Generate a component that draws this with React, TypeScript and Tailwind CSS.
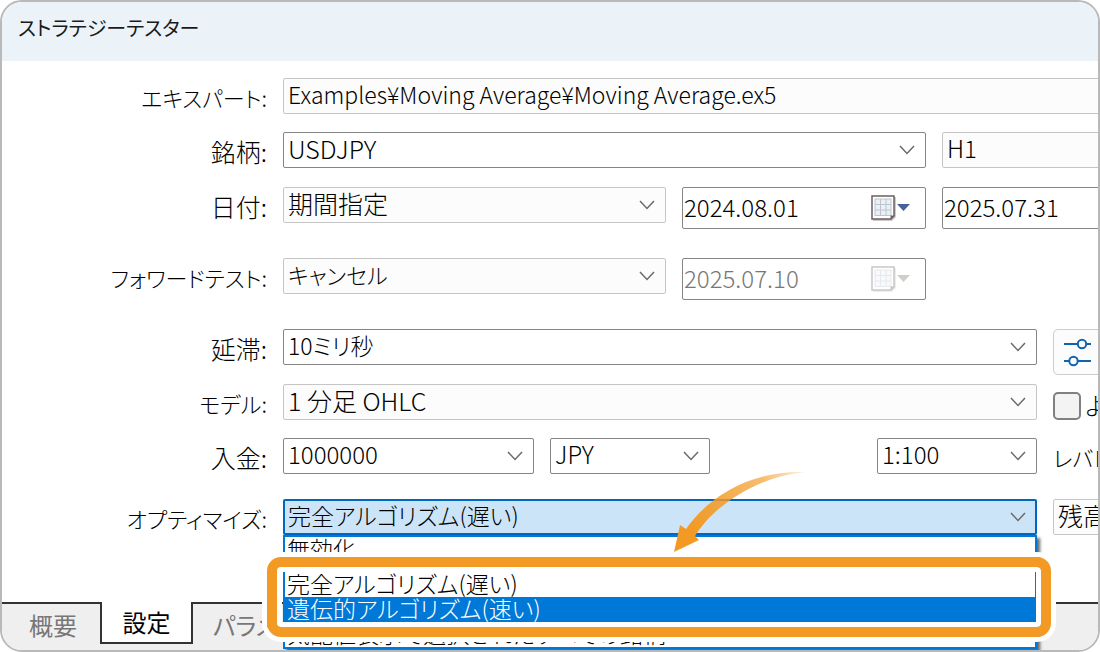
import { ReactNode } from 'react';

const sizes = {
  kana: 'text-[22px]',
  mixed: 'text-[23px]',
  digits: 'text-[24px]',
  kanji: 'text-[25px]',
};
type Size = keyof typeof sizes;

const fieldText = 'leading-[26px] text-black font-light';

function Chevron() {
  return (
    <svg className="pointer-events-none absolute right-[11px] top-[12px] h-3 w-4" viewBox="0 0 16 12" fill="none" stroke="#6a6a6a" strokeWidth="1.5" aria-hidden="true">
      <path d="M1 2 L8 9.5 L15 2" />
    </svg>
  );
}

type SelectProps = { id: string; label?: string; value: string; size?: Size; tone?: 'plain' | 'soft' | 'active'; className: string; children?: ReactNode };

function SelectField({ id, label, value, size = 'digits', tone = 'plain', className, children }: SelectProps) {
  const tones = {
    plain: 'border border-[#858585] bg-white pl-1',
    soft: 'border border-[#c6c6c6] bg-[#fcfcfc] pl-1',
    active: 'border-2 border-[#0067c0] bg-[#cce4f7] pl-[3px]',
  };
  return (
    <div className={`relative ${className}`}>
      <select id={id} aria-label={label} defaultValue={value} className={`h-9 w-full appearance-none rounded-[2px] pb-1 pr-7 outline-none ${fieldText} ${sizes[size]} ${tones[tone]}`}>
        <option>{value}</option>
      </select>
      <Chevron />
      {children}
    </div>
  );
}

function CalendarIcon({ disabled = false }: { disabled?: boolean }) {
  return (
    <svg className={disabled ? 'h-7 w-10 opacity-35' : 'h-7 w-10'} viewBox="0 0 40 28" aria-hidden="true">
      <path d="M2 3h23v20l-4 4H2z" fill="#cfcaca" />
      <path d="M1 2h22v20l-3 3H1z" fill="#fff" stroke="#6b5f62" strokeWidth="1.5" />
      <rect x="3.500" y="4.500" width="17" height="17.500" fill="#bcc4ce" />
      <path d="M4.500 5.500h4.500v4.500H4.500zM10 5.500h4.500v4.500H10zM15.500 5.500h4v4.500h-4zM4.500 11h4.500v4.500H4.500zM10 11h4.500v4.500H10zM15.500 11h4v4.500h-4zM4.500 16.500h4.500v4.500H4.500zM10 16.500h4.500v4.500H10zM15.500 16.500h4v4.500h-4z" fill="#eaf0f6" />
      <path d="M19.500 25.500v-4h4z" fill="#6b5f62" />
      <path d="M26 10h13l-6.500 7z" fill={disabled ? '#77776a' : '#47609a'} />
    </svg>
  );
}

function DateField({ id, label, value, disabled = false, className }: { id: string; label: string; value: string; disabled?: boolean; className: string }) {
  return (
    <div className={`relative ${className}`}>
      <input id={id} aria-label={label} defaultValue={value} disabled={disabled} className={`h-[42px] w-full rounded-[2px] border border-[#858585] bg-white pb-1 pl-px outline-none ${fieldText} ${sizes.digits} disabled:text-[#777]`} />
      <button type="button" aria-label={`${label} カレンダー`} disabled={disabled} className="absolute right-[15px] top-[7px]">
        <CalendarIcon disabled={disabled} />
      </button>
    </div>
  );
}

function Row({ id, label, size, className, children }: { id: string; label: string; size: Size; className: string; children: ReactNode }) {
  return (
    <div className={`flex items-start gap-4 ${className}`}>
      <label htmlFor={id} className={`w-[265px] shrink-0 whitespace-nowrap pt-[5px] text-right font-light leading-7 text-black ${sizes[size]}`}>{label}</label>
      <div className="flex min-w-0 flex-1 items-start gap-4">{children}</div>
    </div>
  );
}

const options = [
  { text: '無効化', selected: false, spacing: 'mb-[10px]' },
  { text: '完全アルゴリズム(遅い)', selected: false, spacing: '' },
  { text: '遺伝的アルゴリズム(速い)', selected: true, spacing: '' },
  { text: '気配値表示で選択されたすべての銘柄', selected: false, spacing: '' },
];

export default function App() {
  return (
    <main className="relative flex min-h-screen flex-col overflow-hidden rounded-[22px] border-2 border-[#b9b9b9] bg-white font-['Noto_Sans_CJK_JP',sans-serif] [font-feature-settings:'palt']">
      <header className="h-[59px] shrink-0 bg-[#ecf3f8] px-4 pt-[10px]">
        <h1 className="text-[20px] leading-8 text-[#1a1a1a]">ストラテジーテスター</h1>
      </header>

      <form className="flex-1 pt-[17px]">
        <Row id="expert" label="エキスパート:" size="kana" className="mb-[18px] h-9">
          <input id="expert" defaultValue="Examples¥Moving Average¥Moving Average.ex5" className={`-mr-1 h-9 min-w-0 flex-1 rounded-[2px] border border-[#c6c6c6] bg-[#fcfcfc] pb-1 pl-1 outline-none ${fieldText} ${sizes.mixed}`} />
        </Row>
        <Row id="symbol" label="銘柄:" size="kanji" className="mb-[19px] h-9">
          <SelectField id="symbol" value="USDJPY" size="kanji" className="min-w-0 flex-1" />
          <SelectField id="period" label="時間足" value="H1" tone="soft" className="-mr-12 w-[204px]" />
        </Row>
        <Row id="range" label="日付:" size="kanji" className="mb-[29px] h-[42px]">
          <SelectField id="range" value="期間指定" size="kanji" tone="soft" className="min-w-0 flex-1" />
          <DateField id="from" label="開始日" value="2024.08.01" className="w-[244px]" />
          <DateField id="to" label="終了日" value="2025.07.31" className="-mr-20 w-[236px]" />
        </Row>
        <Row id="forward" label="フォワードテスト:" size="kana" className="mb-[29px] h-[42px]">
          <SelectField id="forward" value="キャンセル" size="kana" tone="soft" className="min-w-0 flex-1" />
          <DateField id="forward-date" label="フォワード日" value="2025.07.10" disabled className="mr-[172px] w-[244px]" />
        </Row>
        <Row id="delay" label="延滞:" size="kanji" className="mb-[19px] h-9">
          <SelectField id="delay" value="10ミリ秒" size="mixed" className="min-w-0 flex-1" />
          <button type="button" aria-label="詳細設定" className="-mr-[5px] flex h-[46px] w-[50px] shrink-0 items-center justify-center rounded-[5px] border border-[#cccccc] bg-[#fcfcfc]">
            <svg className="h-8 w-7" viewBox="0 0 28 32" fill="none" stroke="#0f64ad" strokeWidth="2" aria-hidden="true">
              <path d="M0 8h13.500M22.500 8H27M0 25h5M14 25h13" />
              <circle cx="18" cy="8" r="4.200" />
              <circle cx="9.500" cy="25" r="4.200" />
            </svg>
          </button>
        </Row>
        <Row id="model" label="モデル:" size="kana" className="mb-[18px] h-9">
          <SelectField id="model" value="1 分足 OHLC" size="kanji" tone="soft" className="min-w-0 flex-1" />
          <div className="flex w-[45px] shrink-0 gap-1 whitespace-nowrap pt-2">
            <input id="profit" type="checkbox" className="size-7 shrink-0 appearance-none rounded-[5px] border-2 border-[#808080] bg-[#f3f3f3]" />
            <label htmlFor="profit" className={`${fieldText} ${sizes.digits}`}>より速く</label>
          </div>
        </Row>
        <Row id="deposit" label="入金:" size="kanji" className="mb-[25px] h-9">
          <SelectField id="deposit" value="1000000" className="w-[251px]" />
          <SelectField id="currency" label="通貨" value="JPY" className="w-[160px]" />
          <SelectField id="leverage" value="1:100" className="ml-auto w-[160px]" />
          <label htmlFor="leverage" className={`w-[45px] shrink-0 whitespace-nowrap pt-[6px] ${fieldText} ${sizes.kana}`}>レバレッジ</label>
        </Row>
        <Row id="optimize" label="オプティマイズ:" size="kana" className="h-[103px]">
          <SelectField id="optimize" value="完全アルゴリズム(遅い)" size="mixed" tone="active" className="z-10 min-w-0 flex-1">
            <ul role="listbox" aria-label="オプティマイズ" className="absolute inset-x-0 top-9 border-2 border-[#0078d7] bg-white shadow-[3px_3px_3px_rgba(0,0,0,0.6)]">
              {options.map((o) => (
                <li key={o.text} role="option" aria-selected={o.selected} className={`h-[25px] whitespace-nowrap pl-[2px] font-light leading-[22px] ${sizes.mixed} ${o.spacing} ${o.selected ? 'bg-[#0078d7] text-white' : 'text-black'}`}>{o.text}</li>
              ))}
            </ul>
            <div className="pointer-events-none absolute -left-4 -right-[14px] top-[58px] h-20 rounded-[14px] border-[10px] border-[#f39a24] shadow-[0_0_0_5px_#fff,inset_0_0_0_5px_#fff]" />
            <svg className="pointer-events-none absolute right-[233px] top-[-29px] h-[84px] w-[132px]" viewBox="0 0 132 84" aria-hidden="true">
              <defs>
                <linearGradient id="tail" gradientUnits="userSpaceOnUse" x1="20" y1="60" x2="130" y2="2">
                  <stop offset="0" stopColor="#f39a24" />
                  <stop offset="0.700" stopColor="#f39a24" stopOpacity="0.650" />
                  <stop offset="1" stopColor="#f39a24" stopOpacity="0.200" />
                </linearGradient>
              </defs>
              <path d="M2 82 L8 55 L14 59 C36 28 76 0 134 2 C86 6 42 35 23 66 L27 70 Z" fill="url(#tail)" />
            </svg>
          </SelectField>
          <SelectField id="criterion" label="最適化基準" value="残高最大" size="kanji" tone="soft" className="-mr-24 w-[141px]" />
        </Row>
      </form>

      <nav className="flex h-12 shrink-0 items-start bg-[#efefef] text-[24px] leading-10 text-[#777]">
        <button type="button" className="h-12 w-[98px] border-t-2 border-[#333] pb-1 pl-1">概要</button>
        <button type="button" className="h-[42px] w-[93px] border-x-2 border-b-2 border-[#333] bg-white text-black">設定</button>
        <button type="button" className="h-12 flex-1 border-t-2 border-[#333] pb-1 pl-5 text-left">パラメータ</button>
      </nav>
    </main>
  );
}
